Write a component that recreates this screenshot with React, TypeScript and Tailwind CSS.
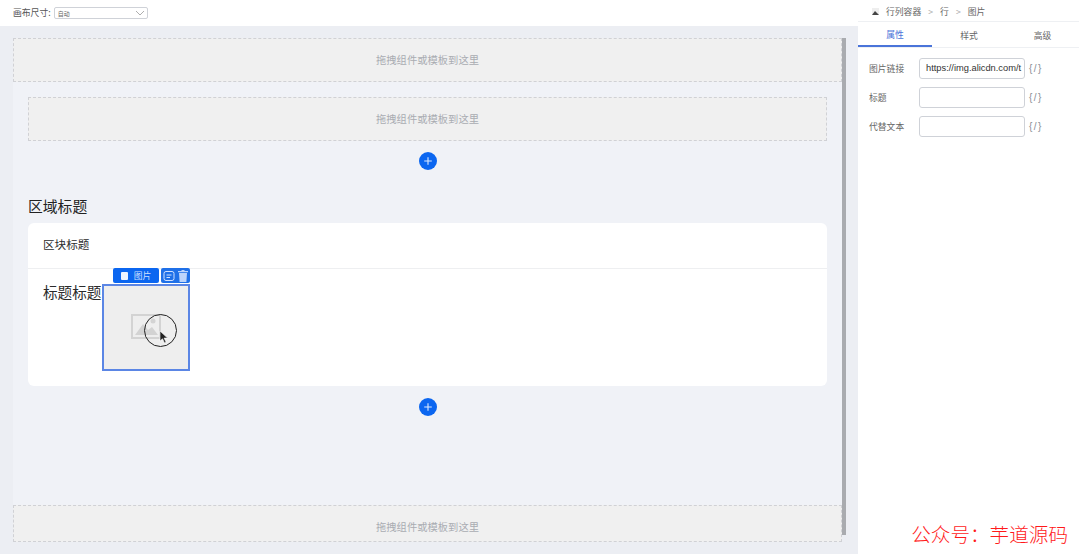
const FONT = "font-['Noto_Sans_CJK_SC','Inter',sans-serif]";

function Slot({ className = "" }: { className?: string }) {
  return (
    <div className={"flex items-center justify-center border border-dashed border-[#d0d1d5] bg-[#f0f0f0] text-[10.3px] text-[#a9acb2] " + className}>
      拖拽组件或模板到这里
    </div>
  );
}

function Plus({ className = "" }: { className?: string }) {
  return (
    <div className={"flex justify-center " + className}>
      <div className="flex h-[18px] w-[18px] items-center justify-center rounded-full bg-[#0b66f0]">
        <svg width="10" height="10" viewBox="0 0 10 10" stroke="#dce9ff" strokeWidth="1.1" fill="none">
          <path d="M5 1.2v7.6M1.2 5h7.6" />
        </svg>
      </div>
    </div>
  );
}

function ImageBox() {
  return (
    <div className="relative flex h-[87px] w-[88px] items-center justify-center border-2 border-[#5b86e5] bg-[#eeeeee]">
      <svg width="30" height="25" viewBox="0 0 30 25" className="mt-[-2px]">
        <rect x="1" y="1" width="28" height="23" fill="none" stroke="#d3d3d3" strokeWidth="2" />
        <path d="M4 21l8-11 5 6 4-3 6 8z" fill="#d3d3d3" />
        <circle cx="22" cy="7" r="2.5" fill="#d3d3d3" />
      </svg>
      <div className="absolute left-[40px] top-[28px] h-[33px] w-[33px] rounded-full border border-[#222]" />
      <svg width="10" height="14" viewBox="0 0 10 14" className="absolute left-[55px] top-[44px]">
        <path d="M1 1v10l2.5-2.2L5.5 13l1.6-.8-2-4.1H8.6z" fill="#222" stroke="#fff" strokeWidth="0.6" />
      </svg>
      <div className="absolute left-[9px] top-[-18px] flex h-[15px] w-[46px] items-center justify-center gap-[6px] rounded-[2px] bg-[#0b66f0] text-[8.8px] text-[#cfe0ff]">
        <span className="h-[8px] w-[7px] rounded-[1px] bg-[#eef4ff]" />
        图片
      </div>
      <div className="absolute left-[57px] top-[-18px] flex h-[15px] w-[29px] items-center justify-center gap-[3px] rounded-[2px] bg-[#1f70e8]">
        <svg width="12" height="12" viewBox="0 0 12 12" fill="none" stroke="#cfe0ff" strokeWidth="1">
          <rect x="1" y="1.5" width="10" height="9" rx="2" />
          <path d="M3.5 5h5M3.5 7.5h3.5" />
        </svg>
        <svg width="10" height="12" viewBox="0 0 10 12" fill="#bcd4fb">
          <path d="M3.5 0h3v1H10v1.2H0V1h3.5zM1 3h8l-.6 9H1.6z" />
        </svg>
      </div>
    </div>
  );
}

function Field({ label, value = "" }: { label: string; value?: string }) {
  return (
    <div className="flex h-[21px] items-center">
      <span className="w-[50px] text-[8.8px] text-[#666]">{label}</span>
      <div className="flex h-[21px] w-[106px] items-center overflow-hidden whitespace-nowrap rounded-[3px] border border-[#cfd2d8] bg-white pl-[6px] font-['Liberation_Sans',sans-serif] text-[9.3px] text-[#333]">
        {value}
      </div>
      <span className="ml-[4px] font-['Liberation_Sans',sans-serif] text-[10px] tracking-[1.5px] text-[#8b8f96]">{"{/}"}</span>
    </div>
  );
}

export default function App() {
  return (
    <div className={"flex h-[554px] w-[1079px] overflow-hidden bg-white " + FONT}>
      <div className="flex w-[858px] flex-col">
        <div className="flex h-[26px] items-center gap-[3px] bg-white pl-[13px] text-[8.8px] text-[#555]">
          <span>画布尺寸:</span>
          <div className="flex h-[12px] w-[94px] items-center justify-between rounded-[2px] border border-[#cfd2d8] pl-[3px] pr-[2px] text-[6px] text-[#666]">
            自动
            <svg width="10" height="6" viewBox="0 0 10 6" fill="none" stroke="#999" strokeWidth="0.8">
              <path d="M1 1l4 4 4-4" />
            </svg>
          </div>
        </div>
        <div className="flex flex-1 bg-[#eceef3] pb-[12px] pl-[13px] pr-[12px] pt-[12px]">
          <div className="flex flex-1 flex-col bg-[#f0f2f7]">
            <Slot className="h-[44px]" />
            <div className="flex flex-1 flex-col px-[15px] pt-[15px]">
              <Slot className="h-[44px]" />
              <Plus className="mt-[11px]" />
              <h2 className="mt-[25px] text-[14.8px] font-normal leading-[22px] text-[#222]">区域标题</h2>
              <div className="mt-[6px] flex h-[163px] flex-col rounded-[6px] bg-white">
                <div className="flex h-[46px] items-center border-b border-[#eeeff1] pb-[2px] pl-[15px] text-[11.6px] text-[#2b2b2b]">
                  区块标题
                </div>
                <div className="flex pl-[15px] pt-[15px]">
                  <span className="mt-[-2px] w-[59px] shrink-0 whitespace-nowrap text-[14.6px] leading-[20px] text-[#2b2b2b]">标题标题</span>
                  <ImageBox />
                </div>
              </div>
              <Plus className="mt-[12px]" />
            </div>
            <Slot className="h-[37px] pt-[7px]" />
          </div>
          <div className="mb-[7px] w-[4px] bg-[#a9abaf]" />
        </div>
      </div>
      <div className="flex w-[221px] flex-col bg-white">
        <div className="flex h-[21px] items-center pl-[14px] pt-[2px] text-[8.8px] text-[#666]">
          <svg width="7" height="7" viewBox="0 0 7 7" className="mr-[7px]">
            <rect width="7" height="7" fill="#eee" />
            <path d="M0 7l3-4 2 2 2 2z" fill="#444" />
          </svg>
          <span>行列容器</span>
          <span className="ml-[7px] text-[#aaa]">&gt;</span>
          <span className="ml-[7px]">行</span>
          <span className="ml-[7px] text-[#aaa]">&gt;</span>
          <span className="ml-[7px]">图片</span>
        </div>
        <div className="flex h-[27px] border-y border-[#eef0f3] text-[8.8px] text-[#666]">
          <div className="flex w-[74px] items-center justify-center border-b-2 border-[#4a74d9] pt-[2px] text-[#4a74d9]">属性</div>
          <div className="flex w-[74px] items-center justify-center pt-[2px]">样式</div>
          <div className="flex w-[73px] items-center justify-center pt-[2px]">高级</div>
        </div>
        <div className="flex flex-col gap-[8px] pl-[11px] pt-[10px]">
          <Field label="图片链接" value="https://img.alicdn.com/t" />
          <Field label="标题" />
          <Field label="代替文本" />
        </div>
        <div className="mt-auto flex justify-end pb-[9px] pr-[11px] text-[19.6px] font-light leading-[22px] text-[#ff1a1a]">
          {"公众号\uFF1A芋道源码"}
        </div>
      </div>
    </div>
  );
}
